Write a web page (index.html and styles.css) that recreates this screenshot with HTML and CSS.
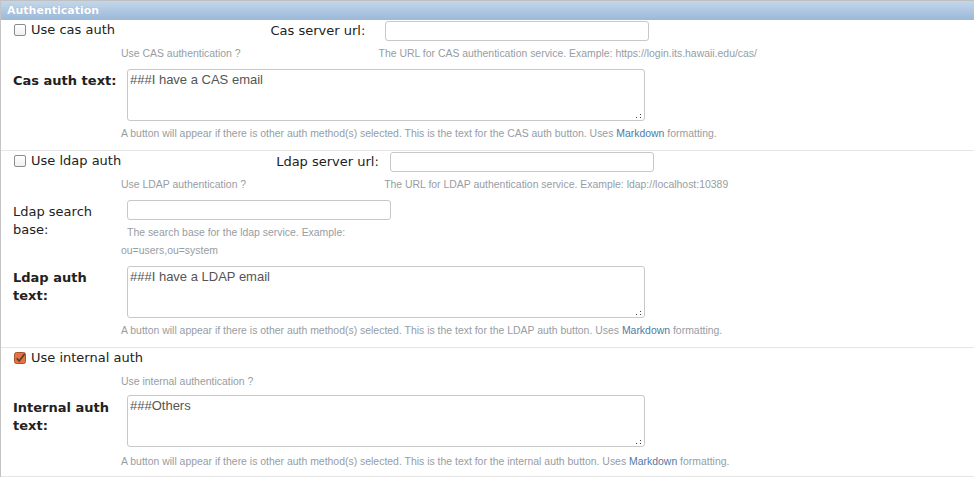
FILE: index.html
```html
<!DOCTYPE html>
<html>
<head>
<meta charset="utf-8">
<link rel="stylesheet" href="styles.css">
</head>
<body>
<div class="panel">
  <div class="header">Authentication</div>

  <div class="section">
    <div class="row">
      <div class="field">
        <label class="check"><span class="cb"></span>Use cas auth</label>
        <div class="help">Use CAS authentication ?</div>
      </div>
      <div class="field">
        <label class="lbl mid">Cas server url:</label>
        <input class="text" type="text">
        <div class="help">The URL for CAS authentication service. Example: https://login.its.hawaii.edu/cas/</div>
      </div>
    </div>
    <div class="field">
      <label class="lbl bold span">Cas auth text:</label>
      <div class="ta-wrap"><textarea class="ta">###I have a CAS email</textarea><svg class="grip" width="6" height="5" viewBox="0 0 6 5"><rect x="0" y="4" width="1" height="1"/><rect x="4" y="1" width="1" height="1"/><rect x="4" y="4" width="1" height="1"/></svg></div>
      <div class="help">A button will appear if there is other auth method(s) selected. This is the text for the CAS auth button. Uses <a class="link">Markdown</a> formatting.</div>
    </div>
  </div>

  <div class="section">
    <div class="row">
      <div class="field">
        <label class="check"><span class="cb"></span>Use ldap auth</label>
        <div class="help">Use LDAP authentication ?</div>
      </div>
      <div class="field">
        <label class="lbl mid">Ldap server url:</label>
        <input class="text" type="text">
        <div class="help">The URL for LDAP authentication service. Example: ldap://localhost:10389</div>
      </div>
    </div>
    <div class="field fixed">
      <label class="lbl span">Ldap search base:</label>
      <input class="text" type="text">
      <div class="help indent">The search base for the ldap service. Example: ou=users,ou=system</div>
    </div>
    <div class="field">
      <label class="lbl bold span">Ldap auth text:</label>
      <div class="ta-wrap"><textarea class="ta">###I have a LDAP email</textarea><svg class="grip" width="6" height="5" viewBox="0 0 6 5"><rect x="0" y="4" width="1" height="1"/><rect x="4" y="1" width="1" height="1"/><rect x="4" y="4" width="1" height="1"/></svg></div>
      <div class="help">A button will appear if there is other auth method(s) selected. This is the text for the LDAP auth button. Uses <a class="link">Markdown</a> formatting.</div>
    </div>
  </div>

  <div class="section last">
    <div class="row">
      <div class="field">
        <label class="check"><span class="cb on"><svg width="12" height="12" viewBox="0 0 12 12"><rect x="0.5" y="0.5" width="11" height="11" rx="2" fill="#e4733f" stroke="#a9532c"/><path d="M2.8 6.2 L5.2 9 L10.6 2" fill="none" stroke="#4b4038" stroke-width="1.7"/></svg></span>Use internal auth</label>
        <div class="help">Use internal authentication ?</div>
      </div>
    </div>
    <div class="field">
      <label class="lbl bold span">Internal auth text:</label>
      <div class="ta-wrap"><textarea class="ta">###Others</textarea><svg class="grip" width="6" height="5" viewBox="0 0 6 5"><rect x="0" y="4" width="1" height="1"/><rect x="4" y="1" width="1" height="1"/><rect x="4" y="4" width="1" height="1"/></svg></div>
      <div class="help wide">A button will appear if there is other auth method(s) selected. This is the text for the internal auth button. Uses <a class="link">Markdown</a> formatting.</div>
    </div>
  </div>
</div>
</body>
</html>
```

FILE: styles.css
```css
html, body {
  margin: 0;
  padding: 0;
  background: #fff;
}
body {
  font-family: "DejaVu Sans", sans-serif;
  font-size: 13px;
  color: #222;
}
.panel {
  border-left: 1px solid #c4c4c4;
}
.header {
  height: 19px;
  border-top: 1px solid #c0c0c0;
  background: linear-gradient(#c3d7eb, #9bb9d8);
  color: #fff;
  font-weight: bold;
  font-size: 11px;
  line-height: 19px;
  padding-left: 6px;
  text-shadow: 0 0 1px rgba(120,150,190,0.6);
}
.section {
  display: flex;
  flex-direction: column;
  gap: 6px;
  padding: 1px 0 7px 12px;
  border-bottom: 1px solid #e6e6e6;
}
.section.last {
  gap: 4px;
  padding-top: 0;
  padding-bottom: 5px;
}
.row {
  display: flex;
  align-items: flex-start;
  gap: 30px;
}
.field {
  display: grid;
  grid-template-columns: 114px auto;
  grid-template-rows: minmax(20px, auto) auto;
  align-items: start;
}
.field.fixed {
  grid-template-columns: 114px 264px;
}
.check {
  grid-column: 1 / 3;
  grid-row: 1;
  display: flex;
  align-items: center;
  height: 17px;
  margin-top: 0;
  white-space: nowrap;
}
.last .check {
  margin-top: 1px;
}
.cb {
  display: block;
  box-sizing: border-box;
  width: 12px;
  height: 12px;
  margin: 0 5px 0 1px;
  border: 1px solid #8c8c8c;
  border-radius: 2px;
  background: linear-gradient(#fff, #f0f0f0);
}
.cb.on {
  border: none;
  background: none;
}
.cb.on svg {
  display: block;
}
.lbl {
  grid-column: 1;
  grid-row: 1;
  line-height: 18px;
  padding-top: 3px;
  padding-right: 4px;
}
.last .lbl {
  padding-top: 4px;
}
.lbl.mid {
  line-height: 20px;
  padding-top: 0;
}
.lbl.span {
  grid-row: 1 / 3;
}
.lbl.bold {
  font-weight: bold;
}
.text {
  grid-column: 2;
  grid-row: 1;
  box-sizing: border-box;
  width: 264px;
  height: 20px;
  margin: 0;
  border: 1px solid #c8c8c8;
  border-radius: 3px;
  background: #fff;
  padding: 0 4px;
}
.ta-wrap {
  grid-column: 2;
  grid-row: 1;
  position: relative;
  width: 518px;
  height: 52px;
}
.ta {
  display: block;
  box-sizing: border-box;
  width: 518px;
  height: 52px;
  margin: 0;
  border: 1px solid #c8c8c8;
  border-radius: 3px;
  padding: 2px 2px;
  font-family: "Liberation Sans", Arial, sans-serif;
  font-size: 13px;
  line-height: 16px;
  color: #555;
  resize: none;
  background: #fff;
}
.grip {
  position: absolute;
  right: 3px;
  bottom: 3px;
  fill: #444;
}
.help {
  grid-column: 2;
  grid-row: 2;
  margin: 4px 0 0 -6px;
  font-family: "Liberation Sans", Arial, sans-serif;
  font-size: 10.45px;
  line-height: 18px;
  color: #979da3;
  white-space: nowrap;
}
.last .help {
  margin-top: 5px;
}
.last .help.wide {
  margin-top: 6px;
}
.help.indent {
  white-space: normal;
  width: calc(100% + 6px);
  text-indent: 6px;
}
.link {
  color: #4e7aa6;
  text-decoration: none;
}
```
